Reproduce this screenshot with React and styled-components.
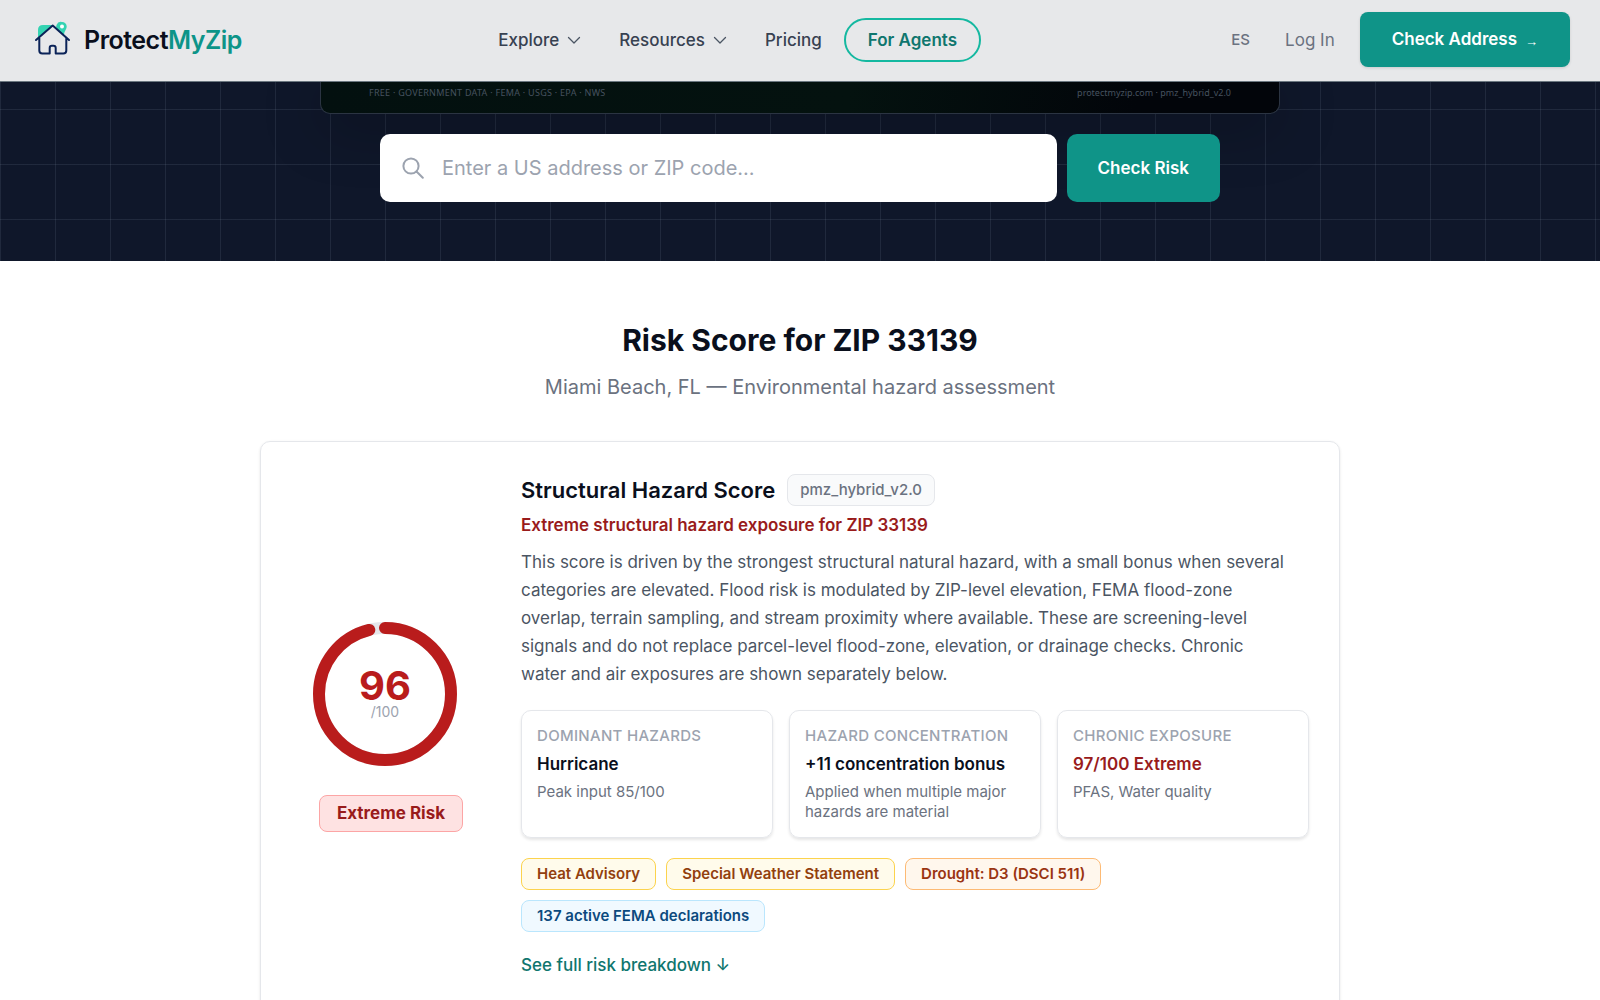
import React from "react";
import styled, { createGlobalStyle } from "styled-components";

const GlobalStyle = createGlobalStyle`
  * {
    box-sizing: border-box;
  }
  body {
    margin: 0;
    background-color: white;
    color: #0a0f1c;
    font-family: Inter, "Liberation Sans", sans-serif;
    font-size: 17px;
  }
  a {
    color: inherit;
    text-decoration: none;
  }
  button,
  input {
    font-family: inherit;
  }
  h1,
  h2,
  h3,
  p,
  ul {
    margin: 0;
    padding: 0;
  }
`;

const HeaderStyle = styled.header`
  display: flex;
  justify-content: space-between;
  align-items: center;
  padding: 12px 30px 14px 34px;
  background-color: #e7e8ea;
  border-bottom: 1px solid #6b7780;
`;

const Logo = styled.a`
  display: flex;
  align-items: center;
  gap: 12px;
  font-size: 25px;
  font-weight: 600;
  letter-spacing: -0.02em;
  span span {
    color: #0d9488;
  }
`;

const Nav = styled.nav`
  display: flex;
  align-items: center;
  gap: 6px;
`;

const NavButton = styled.button`
  display: flex;
  align-items: center;
  gap: 8px;
  padding: 8px 16px;
  border: 0;
  background: none;
  color: #374151;
  font-size: 17px;
  font-weight: 500;
`;

const NavLink = styled.a`
  padding: 8px 16px;
  color: #374151;
  font-weight: 500;
`;

const AgentsLink = styled.a`
  padding: 9px 22px;
  border: 2px solid #14b8a0;
  border-radius: 22px;
  color: #0f766e;
  font-weight: 600;
  line-height: 22px;
`;

const Actions = styled.div`
  display: flex;
  align-items: center;
  gap: 25px;
  color: #6b7280;
`;

const LangButton = styled.button`
  padding: 8px 10px;
  border: 0;
  background: none;
  color: #6b7280;
  font-size: 15px;
  font-weight: 500;
`;

const CtaLink = styled.a`
  display: flex;
  align-items: center;
  gap: 8px;
  padding: 16px 32px;
  border-radius: 8px;
  background-color: #0f9488;
  color: white;
  font-weight: 600;
  line-height: 23px;
  box-shadow: 0 1px 3px rgba(0, 0, 0, 0.12);
`;

const CtaArrow = styled.span`
  padding-top: 4px;
  font-family: "Liberation Sans", sans-serif;
  font-size: 13px;
  font-weight: 400;
  line-height: 19px;
`;

const Hero = styled.section`
  display: flex;
  flex-direction: column;
  align-items: center;
  gap: 20px;
  padding: 0 24px 59px;
  background-color: #0f172a;
  background-image: linear-gradient(
      to right,
      rgba(148, 163, 184, 0.13) 1px,
      transparent 1px
    ),
    linear-gradient(to bottom, rgba(148, 163, 184, 0.13) 1px, transparent 1px);
  background-size: 55px 55px;
  background-position: 0 27px;
  overflow: hidden;
`;

const Preview = styled.div`
  display: flex;
  justify-content: space-between;
  width: 100%;
  max-width: 960px;
  padding: 4px 48px 13px;
  border: 1px solid #2b3442;
  border-top: 0;
  border-radius: 0 0 10px 10px;
  background: linear-gradient(100deg, #03100f, #04120f 55%, #02050a 85%);
  box-shadow: 0 12px 60px rgba(0, 0, 0, 0.3);
  color: #46525f;
  font-family: "Noto Sans", sans-serif;
  font-size: 9px;
  line-height: 14px;
`;

const PreviewSources = styled.span`
  letter-spacing: 0.03em;
`;

const SearchForm = styled.form`
  display: flex;
  gap: 10px;
  width: 100%;
  max-width: 840px;
`;

const SearchBox = styled.label`
  display: flex;
  flex: 1;
  align-items: center;
  gap: 18px;
  padding: 0 22px;
  border-radius: 10px;
  background-color: white;
`;

const SearchInput = styled.input`
  flex: 1;
  min-width: 0;
  padding: 20px 0;
  border: 0;
  outline: 0;
  background: none;
  font-size: 20px;
  line-height: 28px;
  &::placeholder {
    color: #9ca3af;
  }
`;

const SearchButton = styled.button`
  padding: 0 31px;
  border: 0;
  border-radius: 10px;
  background-color: #0f9488;
  color: white;
  font-size: 17px;
  font-weight: 600;
`;

const Main = styled.main`
  display: flex;
  flex-direction: column;
  align-items: center;
  padding: 59px 24px;
`;

const Title = styled.h1`
  font-size: 30px;
  font-weight: 700;
  line-height: 40px;
`;

const Subtitle = styled.p`
  margin-top: 12px;
  color: #6b7280;
  font-size: 20px;
  line-height: 30px;
`;

const ScoreCard = styled.section`
  display: flex;
  align-items: center;
  gap: 30px;
  width: 100%;
  max-width: 1080px;
  margin-top: 39px;
  padding: 32px 30px;
  border: 1px solid #e5e7eb;
  border-radius: 10px;
  box-shadow: 0 1px 3px rgba(0, 0, 0, 0.1);
`;

const ScoreColumn = styled.div`
  flex: 0 0 200px;
  padding-bottom: 20px;
  text-align: center;
  svg {
    display: block;
  }
`;

const Badge = styled.span`
  display: inline-block;
  margin-top: 8px;
  padding: 7px 17px;
  border: 1px solid #fca5a5;
  border-radius: 8px;
  background-color: #fee2e2;
  color: #991b1b;
  font-weight: 700;
  line-height: 21px;
`;

const Details = styled.div`
  flex: 1;
  min-width: 0;
`;

const DetailsHead = styled.div`
  display: flex;
  align-items: center;
  gap: 12px;
  h2 {
    font-size: 22px;
    font-weight: 600;
    line-height: 32px;
  }
`;

const Version = styled.span`
  padding: 5px 12px;
  border: 1px solid #e5e7eb;
  border-radius: 8px;
  background-color: #f9fafb;
  color: #6b7280;
  font-size: 15px;
  font-weight: 500;
  line-height: 20px;
`;

const Summary = styled.p`
  margin-top: 5px;
  color: #991b1b;
  font-weight: 600;
  line-height: 28px;
`;

const Description = styled.p`
  max-width: 768px;
  margin-top: 9px;
  color: #4b5563;
  line-height: 28px;
`;

const Stats = styled.div`
  display: grid;
  grid-template-columns: repeat(3, 1fr);
  gap: 16px;
  margin-top: 22px;
`;

const Stat = styled.div`
  padding: 15px;
  border: 1px solid #e5e7eb;
  border-radius: 10px;
  box-shadow: 0 2px 3px rgba(0, 0, 0, 0.1);
  font-size: 15px;
  line-height: 20px;
  h3 {
    color: #9ca3af;
    font-size: 15px;
    font-weight: 500;
    letter-spacing: 0.02em;
    text-transform: uppercase;
  }
  strong {
    display: block;
    margin: 5px 0;
    color: ${(props) => (props.$danger ? "#991b1b" : "#0a0f1c")};
    font-size: 17px;
    font-weight: 600;
    line-height: 26px;
  }
  p {
    color: #6b7280;
  }
`;

const Alerts = styled.ul`
  display: flex;
  flex-wrap: wrap;
  gap: 10px;
  margin-top: 20px;
  list-style: none;
`;

const tones = {
  amber: { bg: "#fffbeb", border: "#fcd34d", text: "#92400e" },
  orange: { bg: "#fff7ed", border: "#fdba74", text: "#9a3412" },
  blue: { bg: "#f0f9ff", border: "#bae6fd", text: "#0c4a7e" },
};

const Alert = styled.li`
  padding: 5px 15px;
  border: 1px solid ${(props) => tones[props.$tone].border};
  border-radius: 8px;
  background-color: ${(props) => tones[props.$tone].bg};
  color: ${(props) => tones[props.$tone].text};
  font-size: 15px;
  font-weight: 600;
  line-height: 20px;
`;

const BreakdownLink = styled.a`
  display: block;
  margin-top: 19px;
  color: #0f766e;
  font-weight: 500;
  line-height: 28px;
`;

const alerts = [
  { label: "Heat Advisory", tone: "amber" },
  { label: "Special Weather Statement", tone: "amber" },
  { label: "Drought: D3 (DSCI 511)", tone: "orange" },
  { label: "137 active FEMA declarations", tone: "blue" },
];

const stats = [
  { title: "Dominant Hazards", value: "Hurricane", note: "Peak input 85/100" },
  {
    title: "Hazard Concentration",
    value: "+11 concentration bonus",
    note: "Applied when multiple major hazards are material",
  },
  {
    title: "Chronic Exposure",
    value: "97/100 Extreme",
    note: "PFAS, Water quality",
    danger: true,
  },
];

function LogoMark() {
  return (
    <svg width="38" height="38" viewBox="0 0 38 38" fill="none">
      <path d="M4 17V9q0-5 5-5h10z" fill="#34d3b2" />
      <path
        d="M28 1a4.600 4.600 0 0 1 4.700 4.600c0 3-2.700 4.400-2.700 9l-5.500-5.200A4.600 4.600 0 0 1 28 1z"
        fill="#34d3b2"
      />
      <circle cx="28" cy="5.600" r="2" fill="#fff" />
      <path
        d="M2 19 18.700 4.500 35 19M5.300 17v12.500q0 3 3 3h7.400V27q0-2.200 2.200-2.200h1.600q2.200 0 2.200 2.200v5.500h7.600q3 0 3-3V17"
        stroke="#0b2358"
        strokeWidth="2"
        strokeLinecap="round"
        strokeLinejoin="round"
      />
    </svg>
  );
}

function Chevron() {
  return (
    <svg width="14" height="14" viewBox="0 0 14 14" fill="none">
      <path
        d="m1.500 4.500 5.500 5.500 5.500-5.500"
        stroke="#4b5563"
        strokeWidth="1.300"
        strokeLinecap="round"
        strokeLinejoin="round"
      />
    </svg>
  );
}

function SearchIcon() {
  return (
    <svg width="22" height="22" viewBox="0 0 22 22" fill="none">
      <circle cx="9" cy="9" r="7.600" stroke="#9ca3af" strokeWidth="2" />
      <path
        d="m14.500 14.500 6.300 6.300"
        stroke="#9ca3af"
        strokeWidth="2"
        strokeLinecap="round"
      />
    </svg>
  );
}

function Gauge({ score }) {
  const length = 2 * Math.PI * 66;
  return (
    <svg width="188" height="186" viewBox="0 0 188 186" fill="none">
      <circle cx="94" cy="93" r="66" stroke="#e5e7eb" strokeWidth="12" />
      <circle
        cx="94"
        cy="93"
        r="66"
        stroke="#b91c1c"
        strokeWidth="12"
        strokeLinecap="round"
        strokeDasharray={`${(length * score) / 100} ${length}`}
        transform="rotate(-90 94 93)"
      />
      <text
        x="94"
        y="99"
        textAnchor="middle"
        fill="#b91c1c"
        fontSize="40"
        fontWeight="700"
      >
        {score}
      </text>
      <text x="94" y="116" textAnchor="middle" fill="#9ca3af" fontSize="14">
        /100
      </text>
    </svg>
  );
}

function Header() {
  return (
    <HeaderStyle>
      <Logo href="#">
        <LogoMark />
        <span>
          Protect<span>MyZip</span>
        </span>
      </Logo>
      <Nav>
        <NavButton type="button">
          Explore <Chevron />
        </NavButton>
        <NavButton type="button">
          Resources <Chevron />
        </NavButton>
        <NavLink href="#">Pricing</NavLink>
        <AgentsLink href="#">For Agents</AgentsLink>
      </Nav>
      <Actions>
        <LangButton type="button">ES</LangButton>
        <a href="#">Log In</a>
        <CtaLink href="#">
          Check Address <CtaArrow>→</CtaArrow>
        </CtaLink>
      </Actions>
    </HeaderStyle>
  );
}

export default function App() {
  return (
    <>
      <GlobalStyle />
      <Header />
      <Hero>
        <Preview>
          <PreviewSources>
            FREE · GOVERNMENT DATA · FEMA · USGS · EPA · NWS
          </PreviewSources>
          <span>protectmyzip.com · pmz_hybrid_v2.0</span>
        </Preview>
        <SearchForm>
          <SearchBox>
            <SearchIcon />
            <SearchInput
              type="text"
              aria-label="US address or ZIP code"
              placeholder="Enter a US address or ZIP code..."
            />
          </SearchBox>
          <SearchButton type="submit">Check Risk</SearchButton>
        </SearchForm>
      </Hero>
      <Main>
        <Title>Risk Score for ZIP 33139</Title>
        <Subtitle>Miami Beach, FL — Environmental hazard assessment</Subtitle>
        <ScoreCard>
          <ScoreColumn>
            <Gauge score={96} />
            <Badge>Extreme Risk</Badge>
          </ScoreColumn>
          <Details>
            <DetailsHead>
              <h2>Structural Hazard Score</h2>
              <Version>pmz_hybrid_v2.0</Version>
            </DetailsHead>
            <Summary>Extreme structural hazard exposure for ZIP 33139</Summary>
            <Description>
              This score is driven by the strongest structural natural hazard,
              with a small bonus when several categories are elevated. Flood
              risk is modulated by ZIP-level elevation, FEMA flood-zone overlap,
              terrain sampling, and stream proximity where available. These are
              screening-level signals and do not replace parcel-level
              flood-zone, elevation, or drainage checks. Chronic water and air
              exposures are shown separately below.
            </Description>
            <Stats>
              {stats.map((stat) => (
                <Stat key={stat.title} $danger={stat.danger}>
                  <h3>{stat.title}</h3>
                  <strong>{stat.value}</strong>
                  <p>{stat.note}</p>
                </Stat>
              ))}
            </Stats>
            <Alerts>
              {alerts.map((alert) => (
                <Alert key={alert.label} $tone={alert.tone}>
                  {alert.label}
                </Alert>
              ))}
            </Alerts>
            <BreakdownLink href="#">See full risk breakdown ↓</BreakdownLink>
          </Details>
        </ScoreCard>
      </Main>
    </>
  );
}
